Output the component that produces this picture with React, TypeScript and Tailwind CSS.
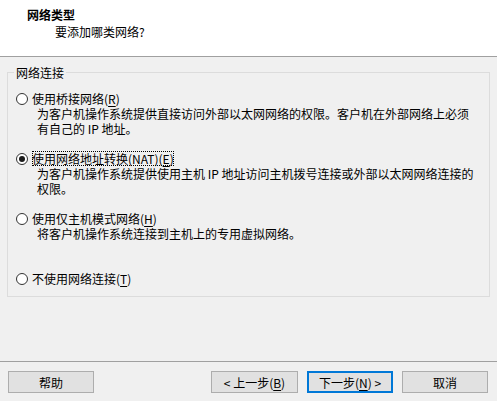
const FONT = { fontFamily: '"Noto Sans CJK SC", "Microsoft YaHei", sans-serif' };

function Radio({ checked }: { checked?: boolean }) {
  return (
    <span className="flex h-[12px] w-[12px] shrink-0 items-center justify-center rounded-full border border-[#333333] bg-white">
      {checked && <span className="block h-[6px] w-[6px] rounded-full bg-[#1a1a1a]" />}
    </span>
  );
}

function Option({
  label,
  mnemonic,
  lines,
  checked,
}: {
  label: string;
  mnemonic: string;
  lines: string[];
  checked?: boolean;
}) {
  return (
    <div className="h-[60px]">
      <div className="flex items-center gap-[4px]">
        <Radio checked={checked} />
        <span
          className={`leading-[15px] ${checked ? "outline outline-1 outline-dotted outline-black -outline-offset-1" : ""}`}
        >
          {label}(<span className="underline underline-offset-2">{mnemonic}</span>)
        </span>
      </div>
      <div className="pl-[21px]">
        {lines.map((l) => (
          <div key={l} className="leading-[15px] whitespace-nowrap">
            {l}
          </div>
        ))}
      </div>
    </div>
  );
}

function Btn({ children, primary, w }: { children: React.ReactNode; primary?: boolean; w: string }) {
  return (
    <button
      className={`flex h-[22px] items-center justify-center bg-[#e1e1e1] text-[12px] leading-[15px] text-black ${w} ${
        primary ? "border-2 border-[#0078d7]" : "border border-[#adadad]"
      }`}
    >
      {children}
    </button>
  );
}

export default function App() {
  return (
    <div className="flex h-[401px] w-[497px] flex-col bg-[#f0f0f0] text-[12px] text-black" style={FONT}>
      {/* header */}
      <div className="h-[56px] bg-white pl-[27px] pt-[7px]">
        <div className="font-bold leading-[15px]">网络类型</div>
        <div className="mt-[2px] pl-[28px] leading-[15px]">要添加哪类网络?</div>
      </div>
      <div className="h-px bg-[#a0a0a0]" />

      {/* body */}
      <div className="h-[304px] px-[7px] pt-[15px]">
        <div className="relative h-[225px] border border-[#dcdcdc] pl-[8px] pt-[18px]">
          <span className="absolute -top-[8px] left-[6px] bg-[#f0f0f0] px-[2px] leading-[15px]">网络连接</span>
          <Option
            label="使用桥接网络"
            mnemonic="R"
            lines={["为客户机操作系统提供直接访问外部以太网网络的权限。客户机在外部网络上必须", "有自己的 IP 地址。"]}
          />
          <Option
            label="使用网络地址转换(NAT)"
            mnemonic="E"
            checked
            lines={["为客户机操作系统提供使用主机 IP 地址访问主机拨号连接或外部以太网网络连接的", "权限。"]}
          />
          <Option label="使用仅主机模式网络" mnemonic="H" lines={["将客户机操作系统连接到主机上的专用虚拟网络。"]} />
          <Option label="不使用网络连接" mnemonic="T" lines={[]} />
        </div>
      </div>

      <div className="h-px bg-[#a0a0a0]" />

      {/* footer */}
      <div className="flex items-start justify-between pl-[8px] pr-[9px] pt-[9px]">
        <Btn w="w-[86px]">帮助</Btn>
        <div className="flex gap-[9px]">
          <Btn w="w-[87px]">
            &lt; 上一步(<span className="underline underline-offset-2">B</span>)
          </Btn>
          <div className="flex gap-[9px]">
            <Btn w="w-[86px]" primary>
              下一步(<span className="underline underline-offset-2">N</span>) &gt;
            </Btn>
            <Btn w="w-[86px]">取消</Btn>
          </div>
        </div>
      </div>
    </div>
  );
}
